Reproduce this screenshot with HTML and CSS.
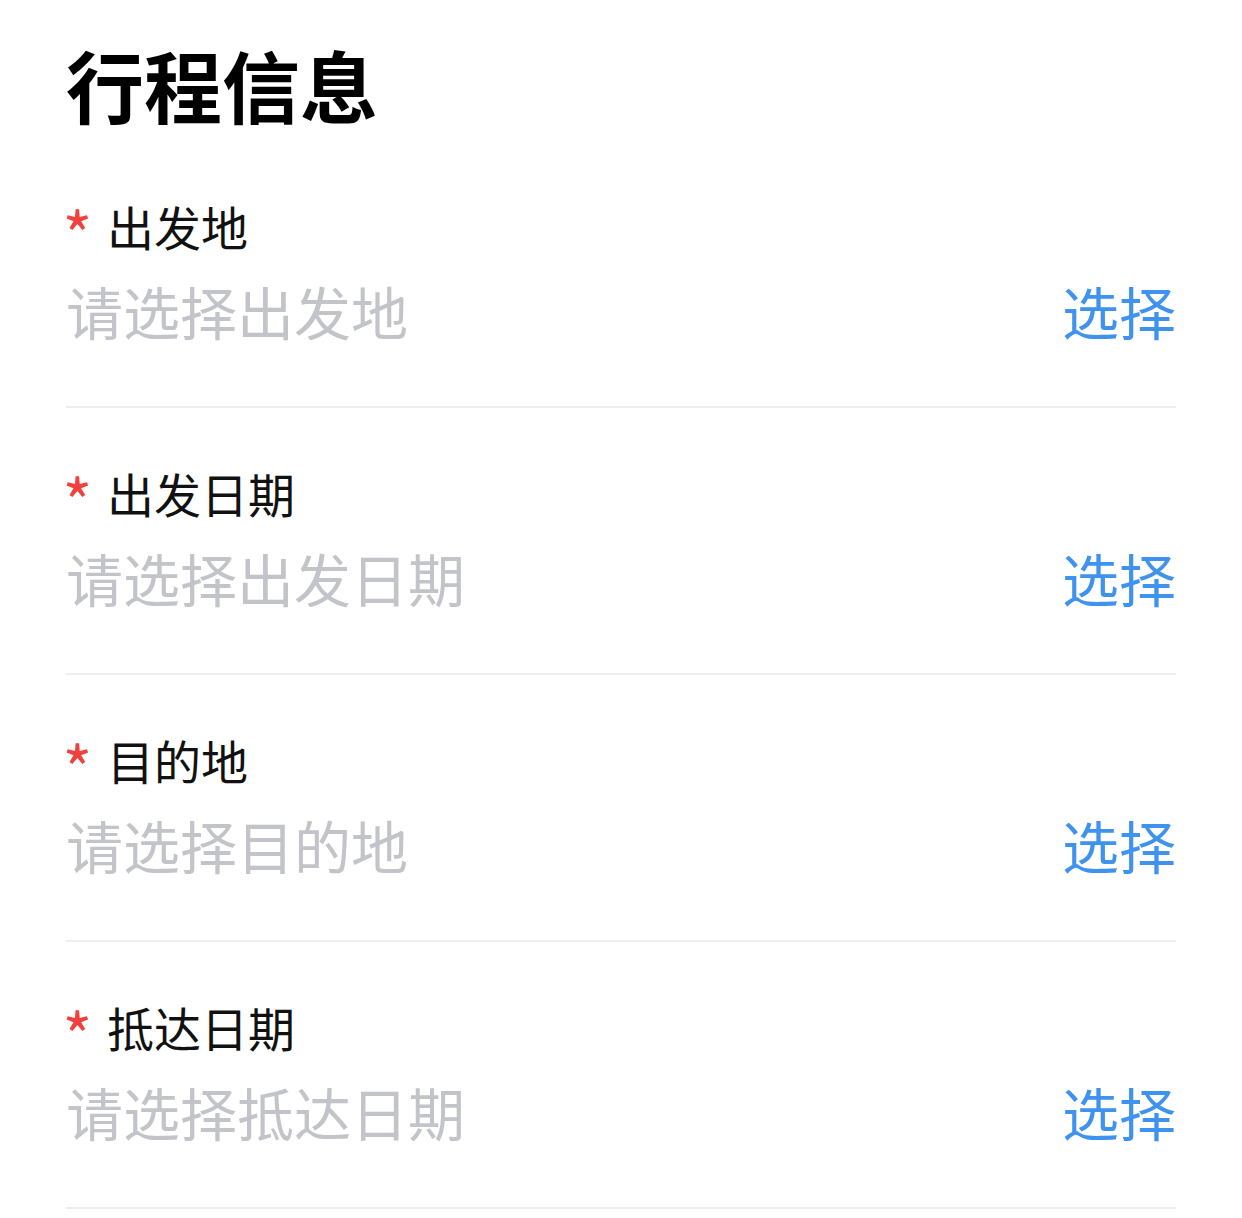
FILE: index.html
```html
<!DOCTYPE html>
<html lang="zh-CN">
<head>
<meta charset="UTF-8">
<meta name="viewport" content="width=device-width, initial-scale=1.0">
<title>行程信息</title>
<link rel="stylesheet" href="styles.css">
</head>
<body>
    <div class="page">
        <h1 class="title">行程信息</h1>

        <div class="field">
            <div class="label"><span class="star">*</span>出发地</div>
            <div class="value">
                <span class="placeholder">请选择出发地</span>
                <span class="pick">选择</span>
            </div>
        </div>

        <div class="field">
            <div class="label"><span class="star">*</span>出发日期</div>
            <div class="value">
                <span class="placeholder">请选择出发日期</span>
                <span class="pick">选择</span>
            </div>
        </div>

        <div class="field">
            <div class="label"><span class="star">*</span>目的地</div>
            <div class="value">
                <span class="placeholder">请选择目的地</span>
                <span class="pick">选择</span>
            </div>
        </div>

        <div class="field">
            <div class="label"><span class="star">*</span>抵达日期</div>
            <div class="value">
                <span class="placeholder">请选择抵达日期</span>
                <span class="pick">选择</span>
            </div>
        </div>
    </div>
</body>
</html>
```

FILE: styles.css
```css
body {
    margin: 0;
    background-color: #ffffff;
    font-family: "Noto Sans CJK SC", "Noto Sans", sans-serif;
    color: #111111;
}
.page {
    padding: 45px 66px 0 66px;
}
.title {
    margin: 0 0 18px 0;
    font-size: 78px;
    line-height: 78px;
    font-weight: 700;
    color: #000000;
}
.field {
    padding: 61px 0 67px 0;
    border-bottom: 2px solid #eeeeee;
}
.label {
    display: flex;
    font-size: 47px;
    line-height: 47px;
}
.star {
    width: 20px;
    margin-right: 21px;
    color: #f2403c;
    font-size: 44px;
    line-height: 47px;
    transform: translate(1px, 3px) scale(1.45);
    transform-origin: 10px 14px;
}
.value {
    display: flex;
    justify-content: space-between;
    margin-top: 33px;
    font-size: 57px;
    line-height: 57px;
}
.placeholder {
    color: #c3c4ca;
}
.pick {
    color: #3f93ee;
}
```
